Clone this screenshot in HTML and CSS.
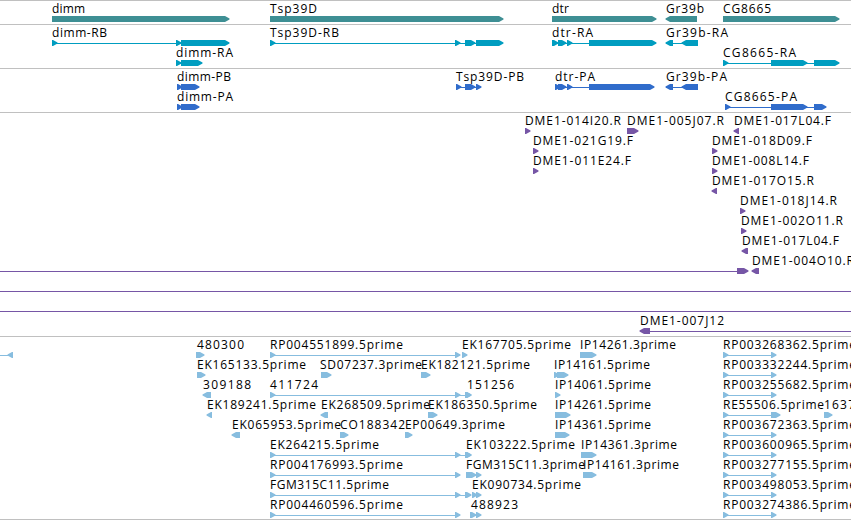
FILE: index.html
```html
<!DOCTYPE html>
<html lang="en">
<head>
<meta charset="utf-8">
<title>Genome tracks</title>
<link rel="stylesheet" href="styles.css">
</head>
<body>
<main class="browser">
  <section class="track genes"></section>
  <section class="track transcripts"></section>
  <section class="track proteins"></section>
  <section class="track clones"></section>
  <section class="track ests"></section>
</main>
<script src="tracks.js"></script>
</body>
</html>
```
FILE: styles.css
```css
body {
  margin: 0;
  background: #fff;
}

.browser {
  display: flex;
  flex-direction: column;
  width: 851px;
  height: 520px;
  overflow: hidden;
}

.track {
  box-sizing: border-box;
  flex: none;
  border-top: 1px solid #c0c0c0;
  overflow: hidden;
}

.track svg {
  display: block;
}

.track text {
  font: 12px "Open Sans", "Noto Sans", sans-serif;
  fill: #000;
}

.track path,
.track rect {
  fill: currentColor;
}

.genes {
  height: 24px;
  color: #3e8f94;
}

.transcripts {
  height: 44px;
  color: #009dc0;
}

.proteins {
  height: 44px;
  color: #306ccb;
}

.clones {
  height: 224px;
  color: #7656a6;
}

.ests {
  height: 184px;
  border-bottom: 1px solid #c0c0c0;
  color: #87bddf;
}
```
FILE: tracks.js
```js
// Feature: [row, label, label start, label end, strand, exons, [line start, line end]]
const spliced = [[270, 275], [455, 460]];
const right = [[723, 728], [771, 776]];
const tracks = {
  genes: [
    [0, "dimm", 52, 85, 1, [[52, 229]]],
    [0, "Tsp39D", 270, 317, 1, [[270, 503]]],
    [0, "dtr", 552, 569, 1, [[552, 656]]],
    [0, "Gr39b", 666, 704, -1, [[666, 697]]],
    [0, "CG8665", 723, 771, 1, [[723, 839]]]
  ],
  transcripts: [
    [0, "dimm-RB", 52, 107, 1, [[52, 57], [176, 181], [181, 229]]],
    [0, "Tsp39D-RB", 270, 339, 1, [[270, 275], [455, 460], [465, 475], [476, 503]]],
    [0, "dtr-RA", 552, 593, 1, [[552, 558], [558, 566], [567, 572], [589, 656]]],
    [0, "Gr39b-RA", 666, 728, -1, [[666, 673], [682, 698]]],
    [1, "dimm-RA", 176, 233, 1, [[176, 181], [181, 202]]],
    [1, "CG8665-RA", 723, 796, 1, [[723, 728], [771, 807], [814, 839]]]
  ],
  proteins: [
    [0, "dimm-PB", 177, 231, 1, [[177, 182], [181, 199]]],
    [0, "Tsp39D-PB", 456, 524, 1, [[456, 461], [465, 475], [476, 481]]],
    [0, "dtr-PA", 555, 595, 1, [[555, 560], [558, 566], [567, 572], [589, 654]]],
    [0, "Gr39b-PA", 666, 727, -1, [[666, 673], [682, 698]]],
    [1, "dimm-PA", 177, 233, 1, [[177, 182], [181, 199]]],
    [1, "CG8665-PA", 725, 797, 1, [[725, 730], [771, 807], [814, 826]]]
  ],
  clones: [
    [0, "DME1-014I20.R", 525, 621, 1, [[525, 530]]],
    [0, "DME1-005J07.R", 627, 724, 1, [[627, 638]]],
    [0, "DME1-017L04.F", 734, 831, -1, [[734, 739]]],
    [1, "DME1-021G19.F", 533, 633, 1, [[533, 538]]],
    [1, "DME1-018D09.F", 712, 812, 1, [[712, 717]]],
    [2, "DME1-011E24.F", 533, 631, 1, [[533, 538]]],
    [2, "DME1-008L14.F", 712, 809, 1, [[712, 717]]],
    [3, "DME1-017O15.R", 712, 814, -1, [[712, 717]]],
    [4, "DME1-018J14.R", 740, 837, 1, [[740, 745]]],
    [5, "DME1-002O11.R", 741, 843, 1, [[741, 746]]],
    [6, "DME1-017L04.F", 742, 839, -1, [[742, 748]]],
    [7, "", 0, 0, 1, [[737, 748]], [0, 737]],
    [7, "DME1-004O10.R", 752, 854, -1, [[752, 759]]],
    [8, "", 0, 0, 1, [], [0, 851]],
    [9, "", 0, 0, 1, [], [0, 851]],
    [10, "DME1-007J12", 640, 724, -1, [[640, 650]], [650, 851]]
  ],
  ests: [
    [0, "", 0, 0, -1, [[8, 13]], [0, 8]],
    [0, "480300", 197, 244, 1, [[196, 204]]],
    [0, "RP004551899.5prime", 270, 403, 1, spliced],
    [0, "EK167705.5prime", 462, 571, 1, [[462, 467]]],
    [0, "IP14261.3prime", 580, 676, 1, [[580, 596]]],
    [0, "RP003268362.5prime", 723, 856, 1, right],
    [1, "EK165133.5prime", 197, 306, 1, [[197, 205]]],
    [1, "SD07237.3prime", 320, 422, 1, [[321, 331]]],
    [1, "EK182121.5prime", 421, 530, 1, [[421, 430]]],
    [1, "IP14161.5prime", 554, 650, 1, [[554, 559], [557, 568]]],
    [1, "RP003332244.5prime", 723, 856, 1, right],
    [2, "309188", 203, 251, -1, [[203, 211]]],
    [2, "411724", 270, 318, 1, [...spliced, [465, 471]]],
    [2, "151256", 467, 514, 1, [[465, 471]]],
    [2, "IP14061.5prime", 555, 651, 1, [[555, 560]]],
    [2, "RP003255682.5prime", 723, 856, 1, right],
    [3, "EK189241.5prime", 207, 316, -1, [[207, 212]]],
    [3, "EK268509.5prime", 321, 430, -1, [[321, 328]]],
    [3, "EK186350.5prime", 428, 537, 1, [[428, 437]]],
    [3, "IP14261.5prime", 555, 651, 1, [[555, 570]]],
    [3, "RE55506.5prime", 723, 824, 1, [[723, 728], [771, 780]]],
    [3, "1637", 824, 855, 1, [[824, 832]]],
    [4, "EK065953.5prime", 232, 341, -1, [[232, 240]]],
    [4, "CO188342", 340, 405, 1, [[340, 348]]],
    [4, "EP00649.3prime", 405, 505, 1, [[405, 412]]],
    [4, "IP14361.5prime", 555, 651, 1, [[555, 569]]],
    [4, "RP003672363.5prime", 723, 856, 1, right],
    [5, "EK264215.5prime", 270, 379, 1, [...spliced, [465, 471]]],
    [5, "EK103222.5prime", 466, 575, 1, [[466, 471]]],
    [5, "IP14361.3prime", 581, 677, 1, [[581, 596]]],
    [5, "RP003600965.5prime", 723, 856, 1, right],
    [6, "RP004176993.5prime", 270, 403, 1, spliced],
    [6, "FGM315C11.3prime", 466, 585, 1, [[466, 476], [476, 481]]],
    [6, "IP14161.3prime", 583, 679, 1, [[583, 596]]],
    [6, "RP003277155.5prime", 723, 856, 1, right],
    [7, "FGM315C11.5prime", 270, 389, 1, [...spliced, [465, 471]]],
    [7, "EK090734.5prime", 472, 581, 1, [[472, 477], [476, 481]]],
    [7, "RP003498053.5prime", 723, 856, 1, right],
    [8, "RP004460596.5prime", 270, 403, 1, spliced],
    [8, "488923", 471, 518, 1, [[470, 476], [476, 481]]],
    [8, "RP003274386.5prime", 723, 856, 1, right]
  ]
};

// Exon body with an arrowhead of up to five pixels on its strand's end.
function exonPath(start, end, strand, top) {
  const head = Math.min(5, end - start);
  if (strand > 0) {
    return `M${start} ${top}H${end - head + 1}L${end + 0.5} ${top + 2.5}V${top + 3.5}L${end - head + 1} ${top + 6}H${start}Z`;
  }
  return `M${end} ${top}H${start + head - 1}L${start - 0.5} ${top + 2.5}V${top + 3.5}L${start + head - 1} ${top + 6}H${end}Z`;
}

for (const [name, features] of Object.entries(tracks)) {
  const section = document.querySelector("." + name);
  const rows = Math.max(...features.map(f => f[0])) + 1;
  let out = "";
  for (const [row, label, from, to, strand, exons, span] of features) {
    const top = row * 20 + 15;
    const line = span || [exons[0][0], exons[exons.length - 1][1] - 3];
    if (span || exons.length > 1) {
      out += `<rect x="${line[0]}" y="${top + 3}" width="${line[1] - line[0]}" height="1"/>`;
    }
    for (const [a, b] of exons) out += `<path d="${exonPath(a, b, strand, top)}"/>`;
    if (label) out += `<text x="${from}" y="${top - 3}" textLength="${to - from}">${label}</text>`;
  }
  section.innerHTML = `<svg width="851" height="${rows * 20 + 3}">${out}</svg>`;
}
```
